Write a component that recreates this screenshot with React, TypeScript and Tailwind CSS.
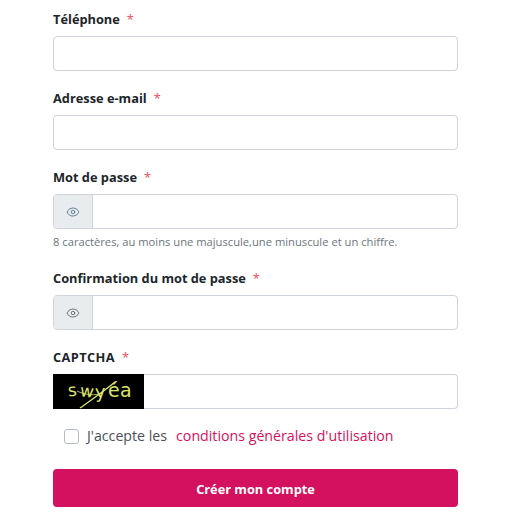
import { Eye } from "lucide-react";

const inputBox = "h-[35px] w-full rounded border border-[#ced4da] bg-white";

function Label({ text, wide }: { text: string; wide?: boolean }) {
    return (
        <label className="block h-[17px] text-[12.8px] leading-[17px] font-bold text-[#212529]">
            <span className={wide ? "tracking-[0.4px]" : ""}>{text}</span>
            <span className="ml-[7px] font-normal text-[#ef4a5f]">*</span>
        </label>
    );
}

function PasswordInput({ eyeColor }: { eyeColor: string }) {
    return (
        <div className={`${inputBox} mt-[8px] flex overflow-hidden`}>
            <div className="flex w-[39px] items-center justify-center border-r border-[#ced4da] bg-[#e9ecef]">
                <Eye size={14} strokeWidth={1.4} className={eyeColor} />
            </div>
            <input className="min-w-0 flex-1" aria-label="mot de passe" />
        </div>
    );
}

function Captcha() {
    return (
        <div className="relative flex h-[35px] w-[91px] shrink-0 items-center overflow-hidden bg-black pl-[15px] font-['DejaVu_Sans',sans-serif] text-[#dce46c]">
            <span className="w-[12px] -rotate-6 -translate-y-[1px] text-[17px] leading-none">s</span>
            <span className="w-[15px] rotate-6 text-[17px] leading-none">w</span>
            <span className="w-[13px] -rotate-3 text-[18px] leading-none">y</span>
            <span className="w-[12px] -translate-y-[1px] text-[19px] leading-none">é</span>
            <span className="w-[13px] -translate-y-[1px] text-[19px] leading-none">a</span>
            <svg className="absolute inset-0" width="91" height="35" viewBox="0 0 91 35" fill="none">
                <path d="M27 34 C38 26 50 18 62 8" stroke="#dce46c" strokeWidth="1.3" />
                <path d="M24 17 C32 21 42 22 50 19" stroke="#dce46c" strokeWidth="0.8" />
            </svg>
        </div>
    );
}

export default function App() {
    return (
        <div className="h-[526px] w-[506px] overflow-hidden bg-white pt-[11px] pr-[48px] pl-[53px] font-['Open_Sans','Noto_Sans',sans-serif]">
            <Label text="Téléphone" />
            <input className={`${inputBox} mt-[8px] block`} aria-label="téléphone" />

            <div className="mt-[19px]">
                <Label text="Adresse e-mail" />
                <input className={`${inputBox} mt-[8px] block`} aria-label="e-mail" />
            </div>

            <div className="mt-[19px]">
                <Label text="Mot de passe" />
                <PasswordInput eyeColor="text-[#4a6a8a]" />
                <p className="mt-[5px] h-[16px] text-[11.2px] leading-[16px] text-[#6c757d]">
                    8 caractères, au moins une majuscule,une minuscule et un chiffre.
                </p>
            </div>

            <div className="mt-[20px]">
                <Label text="Confirmation du mot de passe" />
                <PasswordInput eyeColor="text-[#5c5f63]" />
            </div>

            <div className="mt-[19px]">
                <Label text="CAPTCHA" wide />
                <div className="mt-[8px] flex h-[35px] w-full">
                    <Captcha />
                    <input
                        className="min-w-0 flex-1 rounded-r border border-l-0 border-[#ced4da] bg-white"
                        aria-label="captcha"
                    />
                </div>
            </div>

            <div className="mt-[18px] flex h-[18px] items-center pl-[11px] text-[14.2px] leading-[18px]">
                <span className="h-[15px] w-[15px] rounded-[3px] border border-[#b5bcc4] bg-white" />
                <span className="ml-[8px] text-[#495057]">J'accepte les</span>
                <a className="ml-[9px] text-[#d6105f]">conditions générales d'utilisation</a>
            </div>

            <button className="mt-[24px] h-[38px] w-full rounded bg-[#d4115f] pt-[3px] text-[12.8px] font-bold text-white">
                Créer mon compte
            </button>
        </div>
    );
}
